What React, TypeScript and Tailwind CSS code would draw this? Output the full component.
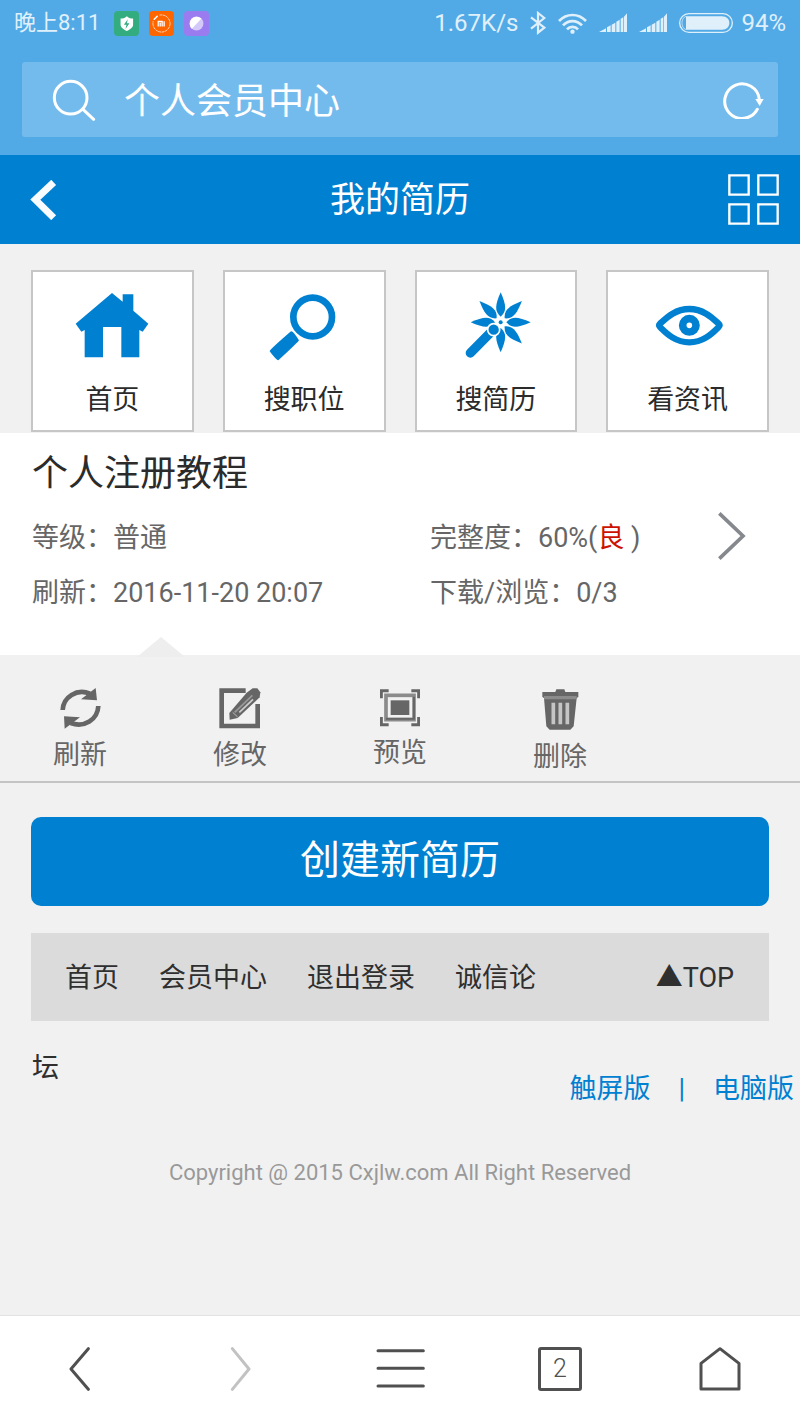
import type { ReactNode } from "react";

function SignalIcon() {
  return (
    <svg viewBox="0 0 84 60" className="h-5 w-7" fill="currentColor" aria-hidden="true">
      <path d="M0 57 21 46V57Z M24 43l11-6v20H24Z M38 35l11-6v28H38Z M52 26l10-6v37H52Z M65 17l8-4v44h-8Z M75 11l9-10v56h-9Z" />
    </svg>
  );
}

function StatusBar() {
  return (
    <div className="flex h-[46px] items-center justify-between px-3.5 text-[#e0f0fb]">
      <div className="flex items-center gap-3.5">
        <span className="text-[22px] leading-8">晚上8:11</span>
        <div className="flex items-center gap-2.5">
          <svg viewBox="0 0 76 76" className="size-[25px]" aria-hidden="true">
            <rect width="76" height="76" rx="12" fill="#33ad7f" />
            <path d="M39 16c7 6 12 7 19 7v19c0 9-9 14-19 19-10-5-19-10-19-19V23c7 0 12-1 19-7Z" fill="#fff" />
            <path d="M42 25 30 42h8l-3 13 12-18h-8Z" fill="#33ad7f" />
          </svg>
          <svg viewBox="0 0 76 76" className="size-[25px]" aria-hidden="true">
            <rect width="76" height="76" rx="12" fill="#ff6600" />
            <circle cx="38" cy="38" r="26" fill="none" stroke="#fff" strokeWidth="2.5" strokeDasharray="9 1.5" opacity=".85" />
            <path d="M12 12h19v10L20 31H12Z" fill="#ff6600" />
            <path d="m16 25 9-9" stroke="#fff" strokeWidth="5" strokeLinecap="round" />
            <path d="M28 47V32h12v15M34 36v11M46 31v16" fill="none" stroke="#fff" strokeWidth="4" />
          </svg>
          <svg viewBox="0 0 76 76" className="size-[25px]" aria-hidden="true">
            <rect width="76" height="76" rx="12" fill="#9a7cf0" />
            <circle cx="38" cy="38" r="21" fill="#d5c9fa" />
            <path d="M24 54A21 21 0 1 1 53 23Z" fill="#fff" />
          </svg>
        </div>
      </div>
      <div className="flex items-center gap-2">
        <div className="flex items-center gap-3">
          <span className="text-[24px] leading-8">1.67K/s</span>
          <svg viewBox="0 0 48 72" className="h-6 w-4" fill="none" stroke="currentColor" strokeWidth="6.5" aria-hidden="true">
            <path d="M3 19 43 50 24 65V6L43 21 3 53" />
          </svg>
          <svg viewBox="0 0 87 63" className="h-[21px] w-[29px]" fill="none" stroke="currentColor" strokeWidth="8" aria-hidden="true">
            <path d="M3 24C26 0 61 0 84 24M15 37c16-17 41-17 57 0M27 49c9-10 24-10 33 0" />
            <circle cx="43.500" cy="56" r="6.500" fill="currentColor" stroke="none" />
          </svg>
          <SignalIcon />
          <SignalIcon />
          <svg viewBox="0 0 162 60" className="h-5 w-[54px]" aria-hidden="true">
            <rect x="2" y="2" width="158" height="56" rx="28" fill="none" stroke="currentColor" strokeWidth="4" />
            <path d="M21 10h108c14 0 22 9 22 20s-8 20-22 20H21Z" fill="currentColor" />
            <path d="M21 10c-9 3-12 12-12 20s3 17 12 20" fill="none" stroke="currentColor" strokeWidth="2" />
          </svg>
        </div>
        <span className="text-[24px] leading-8">94%</span>
      </div>
    </div>
  );
}

function AddressBar() {
  return (
    <div className="mx-[22px] mt-4 flex h-[75px] items-center rounded-[3px] bg-[#74bbed] pr-[14px] pl-[30px] text-white">
      <svg viewBox="0 0 132 126" className="h-[42px] w-11 shrink-0" fill="none" stroke="currentColor" strokeWidth="9" strokeLinecap="round" aria-hidden="true">
        <circle cx="56" cy="56" r="49" />
        <path d="m93 91 32 30" />
      </svg>
      <input
        type="text"
        aria-label="地址栏"
        defaultValue="个人会员中心"
        className="ml-7 min-w-0 flex-1 bg-transparent pt-1 text-[36px] leading-[48px] outline-none"
      />
      <button type="button" aria-label="重新加载" className="shrink-0">
        <svg viewBox="0 0 123 114" className="h-[38px] w-[41px]" fill="none" stroke="currentColor" strokeWidth="9" strokeLinecap="round" aria-hidden="true">
          <path d="M103 85A52 52 0 1 1 109 56" />
          <path d="M97 54h25l-12 21Z" fill="currentColor" stroke="none" />
        </svg>
      </button>
    </div>
  );
}

function TitleBar() {
  return (
    <div className="grid h-[89px] grid-cols-[1fr_auto_1fr] items-center bg-[#0080d1] px-[21px] text-white">
      <a href="#back" aria-label="返回" className="pl-[9px]">
        <svg viewBox="0 0 81 120" className="h-10 w-[27px]" fill="none" stroke="#f8fcff" strokeWidth="21" aria-hidden="true">
          <path d="M71 7 16 59l55 54" />
        </svg>
      </a>
      <h1 className="pt-0.5 text-[35px] leading-[48px]">我的简历</h1>
      <a href="#menu" aria-label="菜单" className="justify-self-end">
        <svg viewBox="0 0 153 153" className="size-[51px]" fill="none" stroke="currentColor" strokeWidth="7" aria-hidden="true">
          <path d="M4 4h58v58H4ZM91 4h58v58H91ZM4 91h58v58H4ZM91 91h58v58H91Z" />
        </svg>
      </a>
    </div>
  );
}

const PETALS = [0, 45, 90, 135, 180, 270, 315];

const shortcuts: { label: string; icon: ReactNode }[] = [
  {
    label: "首页",
    icon: (
      <path d="M132 27 164 53V31h32v49l45 39-17 24-10-5v82h-54v-91h-55v91H50v-82l-10 5-17-24Z" fill="#0080d1" />
    ),
  },
  {
    label: "搜职位",
    icon: (
      <>
        <circle cx="158" cy="99" r="58" fill="none" stroke="#0080d1" strokeWidth="20" />
        <path d="M93 142q6-2 24 27-2 5-62 60-6 0-26-27 0-5 64-60Z" fill="#0080d1" />
      </>
    ),
  },
  {
    label: "搜简历",
    icon: (
      <>
        {PETALS.map((angle) => (
          <path
            key={angle}
            d="M146 98c-19-16-17-34 0-73 17 39 19 57 0 73Z"
            transform={`rotate(${angle} 146 115)`}
            fill="#0080d1"
          />
        ))}
        <circle cx="146" cy="115" r="6" fill="#0080d1" />
        <path d="m55 207 66-67" stroke="#0080d1" strokeWidth="28" strokeLinecap="round" />
        <circle cx="125" cy="137" r="18" fill="#0080d1" stroke="#fff" strokeWidth="5" />
      </>
    ),
  },
  {
    label: "看资讯",
    icon: (
      <>
        <path d="M48 119c14-12 42-44 88-44s74 32 88 44q6 5 0 10c-14 13-42 46-88 46s-74-33-88-46q-6-5 0-10Z" fill="none" stroke="#0080d1" strokeWidth="19" />
        <circle cx="136" cy="124" r="20" fill="none" stroke="#0080d1" strokeWidth="23" />
      </>
    ),
  },
];

function Shortcuts() {
  return (
    <nav className="grid grid-cols-4 gap-[29px] px-[31px] pt-[26px]">
      {shortcuts.map(({ label, icon }) => (
        <a
          key={label}
          href="#shortcut"
          className="flex flex-col items-center gap-2.5 border-2 border-[#c6c6c6] bg-white py-3 text-[27px] leading-9 text-[#2b2b2b]"
        >
          <svg viewBox="0 0 264 264" className="size-[88px]" aria-hidden="true">
            {icon}
          </svg>
          {label}
        </a>
      ))}
    </nav>
  );
}

function ResumeSummary() {
  return (
    <section className="relative mt-px bg-white px-8 pt-3.5 pb-[34px] text-[27px] text-[#666]">
      <h2 className="text-[36px] leading-[54px] text-[#2b2b2b]">个人注册教程</h2>
      <a href="#resume" className="mt-2.5 flex items-start">
        <div className="grid flex-1 grid-cols-[398px_1fr] leading-[55px]">
          <span>等级：普通</span>
          <span>
            完整度：60%(<span className="text-[#cc1100]">良</span> )
          </span>
          <span>刷新：2016-11-20 20:07</span>
          <span>下载/浏览：0/3</span>
        </div>
        <svg viewBox="0 0 84 144" className="mt-px mr-[22px] h-12 w-7" fill="none" stroke="#85888c" strokeWidth="11" aria-hidden="true">
          <path d="M4 4 75 72 4 140" />
        </svg>
      </a>
      <svg viewBox="0 0 48 20" className="absolute -bottom-0.5 left-[137px] h-5 w-12" aria-hidden="true">
        <path d="M24 0 48 20H0Z" fill="#eee" />
      </svg>
    </section>
  );
}

const tools: { label: string; icon: ReactNode }[] = [
  {
    label: "刷新",
    icon: (
      <svg viewBox="0 0 123 123" className="h-[41px] w-[41px]" fill="none" stroke="#666" strokeWidth="14" aria-hidden="true">
        <path d="M8 66C10 27 50 1 90 17M115 54c-2 41-42 66-83 51" />
        <path d="m107 0 4 37-48-3ZM14 122l-2-37 48 3Z" fill="#666" stroke="none" />
      </svg>
    ),
  },
  {
    label: "修改",
    icon: (
      <svg viewBox="0 0 126 123" className="h-[41px] w-[42px]" aria-hidden="true">
        <path d="M80 8H8v106h108V48" fill="none" stroke="#666" strokeWidth="14" />
        <path d="M83 14 101 1h14l9 12-2 15-66 62-24 5-1-20Z" fill="#666" />
        <path d="m47 73 53-51" stroke="#999" strokeWidth="5" />
        <path d="m61 73 41-39" stroke="#ccc" strokeWidth="5" />
        <path d="m41 73 15 14" stroke="#bbb" strokeWidth="3" />
      </svg>
    ),
  },
  {
    label: "预览",
    icon: (
      <svg viewBox="0 0 120 117" className="h-[39px] w-10" fill="none" aria-hidden="true">
        <path d="M4 31V8h22M94 8h22v23M4 87v23h22M94 110h22V87" stroke="#666" strokeWidth="9" />
        <rect x="18" y="22" width="84" height="73" stroke="#8b8b8b" strokeWidth="11" />
        <path d="M18 92h84V26" stroke="#666" strokeWidth="6" />
        <rect x="32" y="37" width="56" height="44" fill="#666" />
      </svg>
    ),
  },
  {
    label: "删除",
    icon: (
      <svg viewBox="0 0 111 129" className="h-[43px] w-[37px]" aria-hidden="true">
        <path d="M1 12h39l3-8h24l3 8h39v15l-5 3-9 85-10 10H23l-10-10L6 30l-5-3Z" fill="#666" />
        <path d="M6 24h98v10H6Z" fill="#8b8b8b" />
        <path d="M34 44v65M55 44v65M76 44v65" stroke="#c5c5c5" strokeWidth="11" />
      </svg>
    ),
  },
];

function ResumeTools() {
  return (
    <div className="grid h-32 grid-cols-5 border-b-2 border-[#c4c4c4] pt-[33px]">
      {tools.map(({ label, icon }) => (
        <button key={label} type="button" className="flex flex-col items-center gap-2 text-[27px] leading-9 text-[#666]">
          {icon}
          {label}
        </button>
      ))}
    </div>
  );
}

function PageFooter() {
  return (
    <footer className="mt-[27px]">
      <nav className="mx-[31px] flex h-[88px] items-start justify-between bg-[#dbdbdb] pr-[35px] pl-px text-[27px] leading-[90px] text-[#2f2f2f]">
        <div className="w-[74%] indent-[33px]">
          <a href="#home" className="mr-10">首页</a>
          <a href="#member" className="mr-10">会员中心</a>
          <a href="#logout" className="mr-10">退出登录</a>
          <a href="#forum">诚信论<wbr />坛</a>
        </div>
        <a href="#top">▲TOP</a>
      </nav>
      <div className="mt-[50px] flex justify-end gap-7 pr-1.5 text-[27px] leading-9 text-[#0080d1]">
        <a href="#touch">触屏版</a>
        <span>|</span>
        <a href="#desktop">电脑版</a>
      </div>
      <p className="mt-[50px] text-center text-[22px] leading-8 text-[#999]">
        Copyright @ 2015 Cxjlw.com All Right Reserved
      </p>
    </footer>
  );
}

function BrowserToolbar() {
  return (
    <nav className="mt-auto grid h-[107px] grid-cols-5 items-center justify-items-center border-t border-[#e2e2e2] bg-white text-[#505050]">
      <button type="button" aria-label="后退">
        <svg viewBox="0 0 66 132" className="h-11 w-[22px]" fill="none" stroke="currentColor" strokeWidth="9" strokeLinecap="round" strokeLinejoin="round" aria-hidden="true">
          <path d="M58 5 6 66l52 61" />
        </svg>
      </button>
      <button type="button" aria-label="前进" className="text-[#c2c2c2]">
        <svg viewBox="0 0 66 132" className="h-11 w-[22px]" fill="none" stroke="currentColor" strokeWidth="9" strokeLinecap="round" strokeLinejoin="round" aria-hidden="true">
          <path d="m10 5 50 61-50 61" />
        </svg>
      </button>
      <button type="button" aria-label="菜单">
        <svg viewBox="0 0 147 120" className="h-10 w-[49px]" fill="none" stroke="currentColor" strokeWidth="9" strokeLinecap="round" aria-hidden="true">
          <path d="M6 5h136M6 58h136M6 111h136" />
        </svg>
      </button>
      <button type="button" aria-label="标签页" className="flex size-11 items-center justify-center rounded-[3px] border-3 border-[#505050] text-[25px] leading-8 font-light">
        2
      </button>
      <button type="button" aria-label="主页">
        <svg viewBox="0 0 126 135" className="h-[45px] w-[42px]" fill="none" stroke="currentColor" strokeWidth="9" strokeLinejoin="round" aria-hidden="true">
          <path d="M6 49 63 5l57 44v77H6Z" />
        </svg>
      </button>
    </nav>
  );
}

export default function App() {
  return (
    <div className="flex min-h-screen flex-col bg-[#f1f1f1] font-['Roboto','Noto_Sans_CJK_SC',sans-serif]">
      <header>
        <div className="bg-[#51aae6] pb-[18px]">
          <StatusBar />
          <AddressBar />
        </div>
        <TitleBar />
      </header>
      <main>
        <Shortcuts />
        <ResumeSummary />
        <ResumeTools />
        <div className="px-[31px] pt-[34px]">
          <button type="button" className="h-[89px] w-full rounded-[10px] bg-[#0080d1] pb-0.5 text-[40px] leading-[56px] text-white">
            创建新简历
          </button>
        </div>
      </main>
      <PageFooter />
      <BrowserToolbar />
    </div>
  );
}
